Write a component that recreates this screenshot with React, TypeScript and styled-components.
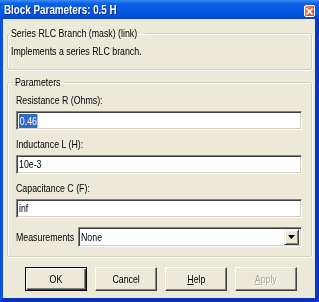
import styled, { createGlobalStyle } from 'styled-components'

const FONT = '"Liberation Sans", Arial, sans-serif'

const GlobalStyle = createGlobalStyle`
    html, body {
        margin: 0;
        padding: 0;
        background: #ECE9D8;
    }
    body {
        font-family: ${FONT};
        font-size: 11px;
        color: #000;
    }
`

const fields = [
    { label: 'Resistance R (Ohms):', value: '0.46', selected: true },
    { label: 'Inductance L (H):', value: '10e-3', selected: false },
    { label: 'Capacitance C (F):', value: 'inf', selected: false },
]

const App = () => {
    return (
        <>
            <GlobalStyle />
            <Window>
                <TitleBar>
                    <Title>Block Parameters: 0.5 H</Title>
                    <CloseButton>
                        <svg width="7" height="7" viewBox="0 0 7 7">
                            <path d="M0.5 0.5 L6.5 6.5 M6.5 0.5 L0.5 6.5" stroke="#fff" strokeWidth="1.6" />
                        </svg>
                    </CloseButton>
                </TitleBar>
                <Frame>
                    <Group>
                        <Legend $offset={1} $width={132}><Narrow>Series RLC Branch (mask) (link)</Narrow></Legend>
                        <GroupBody $top={7} $bottom={12}>
                            <Narrow>Implements a series RLC branch.</Narrow>
                        </GroupBody>
                    </Group>
                    <Group $gap={7}>
                        <Legend $offset={5} $width={46}><Narrow>Parameters</Narrow></Legend>
                        <GroupBody $top={7} $bottom={9}>
                            {fields.map(f => (
                                <FieldBlock key={f.label}>
                                    <Narrow>{f.label}</Narrow>
                                    <EditBox>
                                        <Narrow>
                                            {f.selected ? <Selection>{f.value}</Selection> : f.value}
                                        </Narrow>
                                    </EditBox>
                                </FieldBlock>
                            ))}
                            <SelectRow>
                                <SelectLabel>Measurements</SelectLabel>
                                <SelectBox>
                                    <Narrow>None</Narrow>
                                    <ArrowButton>
                                        <svg width="7" height="4" viewBox="0 0 7 4">
                                            <path d="M0 0 H7 L3.5 4 Z" fill="#000" />
                                        </svg>
                                    </ArrowButton>
                                </SelectBox>
                            </SelectRow>
                        </GroupBody>
                    </Group>
                    <ButtonRow>
                        <Button $default><Narrow $center>OK</Narrow></Button>
                        <Button><Narrow $center>Cancel</Narrow></Button>
                        <Button><Narrow $center><u>H</u>elp</Narrow></Button>
                        <Button $disabled><Narrow $center><u>A</u>pply</Narrow></Button>
                    </ButtonRow>
                </Frame>
            </Window>
        </>
    )
}

export default App


const Window = styled.div`
    width: 319px;
    height: 302px;
    display: flex;
    flex-direction: column;
    overflow: hidden;
`

const TitleBar = styled.div`
    height: 19px;
    flex: none;
    display: flex;
    align-items: center;
    justify-content: space-between;
    padding: 0 4px 0 4px;
    background: linear-gradient(#3B8BF5 0%, #0A5EE6 20%, #0357E0 60%, #0550D8 85%, #0344C4 100%);
`

// the dialog font is a squeezed Tahoma, so text is narrowed horizontally
const Narrow = styled.span<{ $center?: boolean }>`
    display: inline-block;
    font-size: 11px;
    line-height: 11px;
    white-space: nowrap;
    transform: scaleX(0.8);
    transform-origin: ${p => p.$center ? 'center' : 'left'} center;
`

const Title = styled.span`
    display: inline-block;
    font-family: ${FONT};
    font-weight: 700;
    font-size: 12px;
    color: #fff;
    white-space: nowrap;
    transform: scaleX(0.82);
    transform-origin: left center;
    text-shadow: 1px 1px #0A2FA0;
`

const CloseButton = styled.div`
    width: 11px;
    height: 12px;
    margin-top: 3px;
    box-sizing: border-box;
    border: 1px solid #fff;
    border-radius: 2px;
    background: linear-gradient(135deg, #F09A7C 0%, #E2603A 45%, #C93D17 100%);
    display: flex;
    align-items: center;
    justify-content: center;
`

const Frame = styled.div`
    flex: 1;
    display: flex;
    flex-direction: column;
    background: #ECE9D8;
    border-left: 3px solid #0A52DB;
    border-right: 4px solid #0838C0;
    border-bottom: 4px solid #0733B8;
    padding: 9px 3px 0 4px;
`

const Group = styled.fieldset<{ $gap?: number }>`
    margin: ${p => p.$gap || 0}px 0 0 0;
    padding: 0;
    border: 1px solid #D0D0BF;
    box-shadow: inset 1px 1px #fff, 1px 1px #fff;
    border-radius: 2px;
    min-width: 0;
`

const Legend = styled.legend<{ $offset: number, $width: number }>`
    box-sizing: content-box;
    width: ${p => p.$width}px;
    height: 11px;
    line-height: 11px;
    margin-left: ${p => p.$offset}px;
    padding: 0 2px;
    overflow: visible;
`

const GroupBody = styled.div<{ $top: number, $bottom: number }>`
    display: flex;
    flex-direction: column;
    align-items: flex-start;
    padding: ${p => p.$top}px 9px ${p => p.$bottom}px 3px;
`

const FieldBlock = styled.div`
    display: flex;
    flex-direction: column;
    align-self: stretch;
    gap: 5px;
    padding-left: 5px;
    margin-bottom: 9px;
`

const EditBox = styled.div`
    height: 19px;
    box-sizing: border-box;
    background: #fff;
    border-top: 1px solid #808080;
    border-left: 1px solid #808080;
    border-bottom: 1px solid #fff;
    border-right: 1px solid #fff;
    box-shadow: inset 1px 1px #404040, inset -1px -1px #D4D0C8;
    display: flex;
    align-items: center;
    padding-left: 2px;
`

const Selection = styled.span`
    display: inline-block;
    background: #316AC5;
    color: #fff;
    line-height: 14px;
    padding: 0 1px;
`

const SelectRow = styled.div`
    display: flex;
    align-items: center;
    align-self: stretch;
    padding-left: 5px;
`

const SelectLabel = styled(Narrow)`
    width: 62px;
    flex: none;
`

const SelectBox = styled(EditBox)`
    flex: 1;
    height: 20px;
    padding-right: 2px;
    justify-content: space-between;
`

const ArrowButton = styled.div`
    width: 15px;
    height: 16px;
    box-sizing: border-box;
    background: #ECE9D8;
    border: 1px solid;
    border-color: #ECE9D8 #404040 #404040 #ECE9D8;
    box-shadow: inset 1px 1px #fff, inset -1px -1px #808080;
    display: flex;
    align-items: center;
    justify-content: center;
`

const ButtonRow = styled.div`
    display: flex;
    gap: 8px;
    padding-left: 18px;
    margin-top: 10px;
`

const Button = styled.div<{ $default?: boolean, $disabled?: boolean }>`
    width: 62px;
    height: 24px;
    box-sizing: border-box;
    background: #ECE9D8;
    border: 1px solid;
    border-color: ${p => p.$default ? '#000' : '#fff #404040 #404040 #fff'};
    box-shadow: ${p => p.$default
        ? 'inset 1px 1px #fff, inset -1px -1px #404040, inset -2px -2px #808080'
        : 'inset -1px -1px #808080'};
    display: flex;
    align-items: center;
    justify-content: center;
    color: ${p => p.$disabled ? '#ACA899' : '#000'};
    text-shadow: ${p => p.$disabled ? '1px 1px #fff' : 'none'};
`
